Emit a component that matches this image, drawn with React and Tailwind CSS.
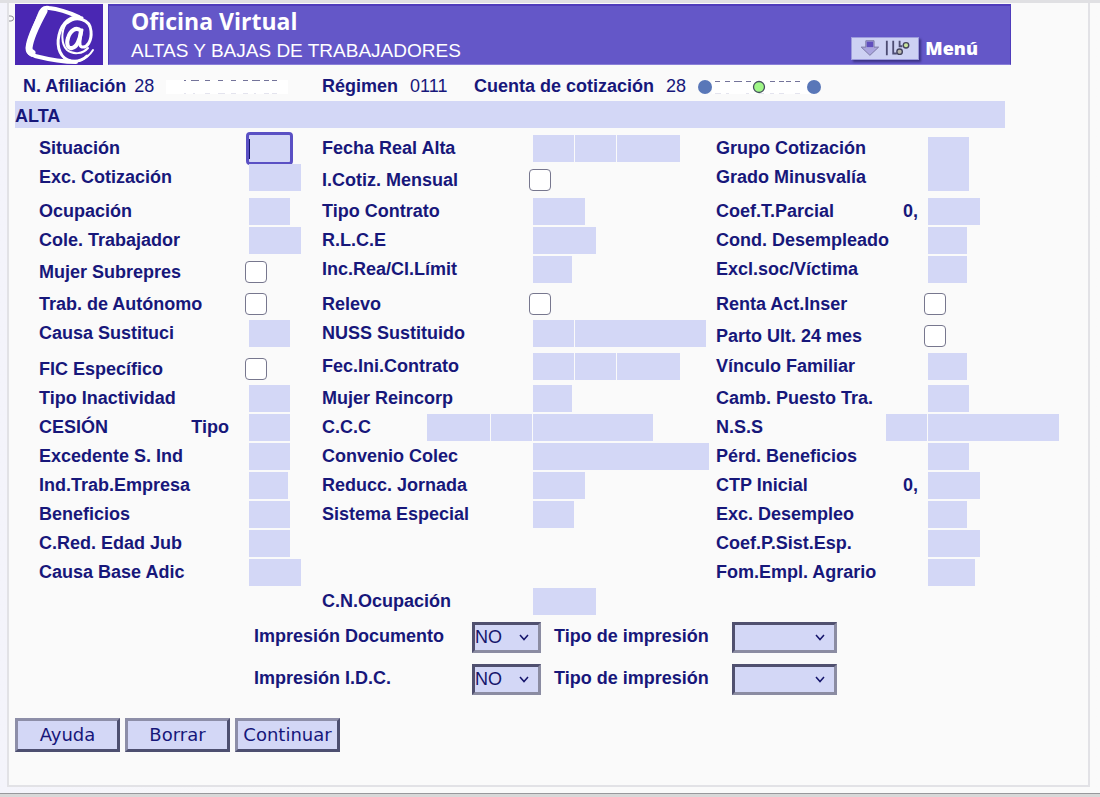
import { Fragment } from 'react'
import clsx from 'clsx'

const WIDTHS = {
  xs: 'w-[39px]',
  sm: 'w-[41px]',
  agr: 'w-[47px]',
  md: 'w-[52px]',
  lg: 'w-[63px]',
  ccc: 'w-[120px]',
  nss: 'w-[131px]',
  text: 'w-[176px]',
}

// One entry per line of the form, three fields on each line
const rows = [
  [
    { label: 'Situación', fields: ['sm'], focused: true },
    { label: 'Fecha Real Alta', fields: ['sm', 'sm', 'lg'] },
    { label: 'Grupo Cotización', fields: ['sm'], bottom: true },
  ],
  [
    { label: 'Exc. Cotización', fields: ['md'] },
    { label: 'I.Cotiz. Mensual', check: true },
    { label: 'Grado Minusvalía', fields: ['sm'] },
  ],
  [
    { label: 'Ocupación', fields: ['sm'] },
    { label: 'Tipo Contrato', fields: ['md'] },
    { label: 'Coef.T.Parcial', prefix: '0,', fields: ['md'] },
  ],
  [
    { label: 'Cole. Trabajador', fields: ['md'] },
    { label: 'R.L.C.E', fields: ['lg'] },
    { label: 'Cond. Desempleado', fields: ['xs'] },
  ],
  [
    { label: 'Mujer Subrepres', check: true },
    { label: 'Inc.Rea/Cl.Límit', fields: ['xs'] },
    { label: 'Excl.soc/Víctima', fields: ['xs'] },
  ],
  [
    { label: 'Trab. de Autónomo', check: true },
    { label: 'Relevo', check: true },
    { label: 'Renta Act.Inser', check: true },
  ],
  [
    { label: 'Causa Sustituci', fields: ['sm'] },
    { label: 'NUSS Sustituido', fields: ['sm', 'nss'] },
    { label: 'Parto Ult. 24 mes', check: true },
  ],
  [
    { label: 'FIC Específico', check: true },
    { label: 'Fec.Ini.Contrato', fields: ['sm', 'sm', 'lg'] },
    { label: 'Vínculo Familiar', fields: ['xs'] },
  ],
  [
    { label: 'Tipo Inactividad', fields: ['sm'] },
    { label: 'Mujer Reincorp', fields: ['xs'] },
    { label: 'Camb. Puesto Tra.', fields: ['sm'] },
  ],
  [
    { label: 'CESIÓN', note: 'Tipo', fields: ['sm'] },
    { label: 'C.C.C', before: ['lg', 'sm'], fields: ['ccc'] },
    { label: 'N.S.S', before: ['sm'], fields: ['nss'] },
  ],
  [
    { label: 'Excedente S. Ind', fields: ['sm'] },
    { label: 'Convenio Colec', fields: ['text'] },
    { label: 'Pérd. Beneficios', fields: ['sm'] },
  ],
  [
    { label: 'Ind.Trab.Empresa', fields: ['xs'] },
    { label: 'Reducc. Jornada', fields: ['md'] },
    { label: 'CTP Inicial', prefix: '0,', fields: ['md'] },
  ],
  [
    { label: 'Beneficios', fields: ['sm'] },
    { label: 'Sistema Especial', fields: ['sm'] },
    { label: 'Exc. Desempleo', fields: ['xs'] },
  ],
  [
    { label: 'C.Red. Edad Jub', fields: ['sm'] },
    null,
    { label: 'Coef.P.Sist.Esp.', fields: ['md'] },
  ],
  [
    { label: 'Causa Base Adic', fields: ['md'] },
    null,
    { label: 'Fom.Empl. Agrario', fields: ['agr'] },
  ],
  [null, { label: 'C.N.Ocupación', fields: ['lg'] }, null],
]

function TextField({ id, size, label, focused }) {
  return (
    <input
      id={id}
      type="text"
      aria-label={label}
      className={clsx(
        'block h-[27px] bg-[#d3d7f6] px-1 text-[18px] text-[#15156b]',
        WIDTHS[size],
        focused ? 'rounded-[1px] outline-3 outline-[#5a50c4]' : 'outline-none'
      )}
    />
  )
}

function Field({ id, item }) {
  if (!item) {
    return (
      <>
        <div />
        <div />
      </>
    )
  }

  if (item.check) {
    return (
      <>
        <label htmlFor={id} className="leading-8">{item.label}</label>
        <div className="flex h-8 items-center">
          <input
            id={id}
            type="checkbox"
            className="size-[22px] appearance-none rounded-[4px] border border-[#77778e] bg-white"
          />
        </div>
      </>
    )
  }

  const before = item.before || []
  return (
    <>
      <div className="flex items-start justify-between whitespace-nowrap">
        <label htmlFor={id} className="leading-[27px]">{item.label}</label>
        {item.note && <span className="pr-4 leading-[27px]">{item.note}</span>}
        {item.prefix && <span className="pr-1.5 leading-[27px]">{item.prefix}</span>}
        {before.length > 0 && (
          <div className="-mr-[3px] flex gap-px">
            {before.map((size, i) => (
              <TextField key={i} size={size} label={`${item.label} ${i + 1}`} />
            ))}
          </div>
        )}
      </div>
      <div className={clsx('relative flex gap-px pl-1', item.bottom ? 'items-end' : 'items-start')}>
        {item.fields.map((size, i) => (
          <TextField
            key={i}
            id={i === 0 ? id : undefined}
            size={size}
            label={i === 0 ? undefined : `${item.label} ${i + 1}`}
            focused={item.focused}
          />
        ))}
        {/* Text cursor */}
        {item.focused && <span className="absolute left-1 top-1 h-5 w-px bg-[#15156b]" />}
      </div>
    </>
  )
}

function Select({ id, className, children }) {
  return (
    <div className={clsx('relative', className)}>
      <select
        id={id}
        className="block h-[31px] w-full appearance-none border-3 border-t-[#50506f] border-r-[#8b8ca2] border-b-[#8b8ca2] border-l-[#50506f] bg-[#d3d7f6] text-[18px] leading-[25px] font-normal text-[#15156b]"
      >
        {children}
      </select>
      <svg viewBox="0 0 10 7" className="pointer-events-none absolute top-3 right-3 h-[7px] w-[10px]" fill="none" stroke="#15156b" strokeWidth="1.5">
        <path d="M1 1l4 4.6L9 1" />
      </svg>
    </div>
  )
}

function PrintOptions({ id, label }) {
  return (
    <div className="flex items-start">
      <label htmlFor={id} className="w-[218px] leading-7">{label}</label>
      <Select id={id} className="w-[69px]">
        <option>NO</option>
        <option>SI</option>
      </Select>
      <label htmlFor={`${id}-tipo`} className="w-[191px] pl-[13px] leading-7">Tipo de impresión</label>
      <Select id={`${id}-tipo`} className="w-[105px]">
        <option></option>
      </Select>
    </div>
  )
}

function Logo() {
  return (
    <svg viewBox="0 0 88 61" className="h-[61px] w-[88px] shrink-0 bg-[#4a27b3]" fill="none" stroke="#fff" strokeLinecap="round" strokeLinejoin="round">
      <path d="M64 13C55 9 44 5 34 4c-6-1-8 2-10 8-4 11-10 22-11 32 0 5 2 6 7 8 12 3 27 6 41 6" strokeWidth="4" />
      <path d="M29 7c-6 11-14 26-15 37 0 2 1 4 3 5" strokeWidth="7" />
      <path d="M67 14C56 10 47 19 44 31c-3 13 2 24 12 26 7 1 12-1 16-5" strokeWidth="3" />
      <path d="M52 19c9-8 23-4 24 8 1 10-4 17-9 16-4-1-2-8 0-17" strokeWidth="3" />
      <path d="M66 27c-5-5-11 0-13 7-2 6 0 11 4 10 5-1 8-9 9-17" strokeWidth="4" />
      <path d="M51 20c-5 7-5 20 1 26 6 5 16 4 21-2M64 57c6-2 11-6 14-11" strokeWidth="2" />
    </svg>
  )
}

function MenuIcon() {
  return (
    <svg viewBox="0 0 68 23" className="h-[23px] w-[68px] border border-[#9d9bdc] bg-[#cdd1f3] shadow-[2px_2px_2px_#3d3486]" fill="none">
      <path d="M13 3h9v7h5l-9.500 9-9.500-9h5z" fill="#aaa5df" stroke="#77739f" />
      <path d="M14 4h7v6h-7z" fill="#604fbe" />
      <path d="M36 3v16M43 3v14h4M50 3v6h3" stroke="#4d4c73" strokeWidth="2" />
      <circle cx="50" cy="15" r="3" fill="#b8b8ad" stroke="#44445c" strokeWidth="1.5" />
      <circle cx="57" cy="8" r="3" fill="#c9e59c" stroke="#44445c" strokeWidth="1.5" />
    </svg>
  )
}

function Header() {
  return (
    <header className="mr-[77px] flex gap-[5px]">
      <Logo />
      <div className="flex h-[61px] flex-1 items-start justify-between border border-t-2 border-[#4f3cbb] border-b-[#8a80d8] bg-[#6457c8] pr-8 pl-[22px] text-white">
        <div>
          <h1 className="font-['Open_Sans','Noto_Sans',sans-serif] text-[23px] leading-[30px] font-bold">Oficina Virtual</h1>
          <h2 className="text-[19px] leading-[30px] font-normal">ALTAS Y BAJAS DE TRABAJADORES</h2>
        </div>
        <a href="#" className="flex items-center gap-1.5 pt-[26px] font-['Open_Sans','Noto_Sans',sans-serif] text-[18px] leading-8 font-extrabold">
          <MenuIcon />
          Menú
        </a>
      </div>
    </header>
  )
}

function AccountInfo() {
  return (
    <div className="grid h-9 grid-cols-[299px_152px_1fr] items-center pt-[7px] pl-2 whitespace-nowrap">
      <div className="flex items-center gap-2">
        <span>N. Afiliación</span>
        <span className="font-normal">28</span>
        {/* Hidden number */}
        <svg viewBox="0 0 122 14" className="ml-1 h-3.5 w-[122px]">
          <path d="M0 0h122v14H0z" fill="#fff" />
          <path d="M18 .5h2M25 .5h8M39 .5h5M52 .5h5M65 .5h5M77 .5h5M86 .5h8M98 .5h5M106 .5h5" stroke="#74749a" />
          <path d="M18 13.5h2M27 13.5h2M39 13.5h5M52 13.5h7M65 13.5h5M77 13.5h5M88 13.5h2M98 13.5h5M106 13.5h5" stroke="#e4e4ee" />
        </svg>
      </div>
      <div className="flex gap-3">
        <span>Régimen</span>
        <span className="font-normal">0111</span>
      </div>
      <div className="flex items-center gap-3">
        <span>Cuenta de cotización</span>
        <span className="font-normal">28</span>
        <svg viewBox="0 0 124 14" className="h-3.5 w-[124px]">
          <path d="M14 0h102v14H14z" fill="#fff" />
          <path d="M17 1.5h5M27 1.5h5M36 1.5h8M48 1.5h5M72 1.5h5M81 1.5h5M88 1.5h5M97 1.5h5" stroke="#74749a" />
          <path d="M17 13.5h6M28 13.5h3M48 13.5h3M61 13.5h5M72 13.5h4M81 13.5h5M97 13.5h5" stroke="#e4e4ee" />
          <circle cx="7" cy="7" r="7" fill="#5977b8" />
          <circle cx="61" cy="7" r="5.5" fill="#a0f787" stroke="#46505f" strokeWidth="1.3" />
          <circle cx="116" cy="7" r="7" fill="#5977b8" />
        </svg>
      </div>
    </div>
  )
}

const buttonClass =
  "h-[34px] w-[105px] border-3 border-t-[#8d8ea8] border-r-[#4d4f70] border-b-[#4d4f70] border-l-[#8d8ea8] bg-[#d3d7f6] font-['DejaVu_Sans',sans-serif] text-[18px] leading-7 font-normal"

export default function App() {
  return (
    <div className="flex min-h-screen flex-col bg-[#fafafa] font-['Liberation_Sans',Arial,sans-serif] text-[18px] font-bold text-[#17177a]">
      <div className="flex-1 border-t-3 border-[#e0e0e3] bg-linear-to-r from-[#f4f4fb] from-0% to-[#fafafa] to-30% pr-[10px] pb-[6px] pl-[7px]">
        <main className="relative h-full border-2 border-t-0 border-[#e2e2e6] bg-[#fafafa] pt-px pb-[33px] pl-[6px]">
          <svg viewBox="0 0 5 7" className="absolute top-3 left-0 h-[7px] w-[5px]" fill="none" stroke="#8d8d95">
            <path d="M0 1h2a2 2 0 0 1 0 5H0" />
          </svg>

          <Header />

          <form onSubmit={(e) => e.preventDefault()}>
            <AccountInfo />
            <h3 className="mr-[83px] h-[27px] bg-[#d3d7f6] leading-[30px]">ALTA</h3>

            {/* Worker data */}
            <div className="mt-[7px] grid grid-cols-[206fr_77fr_207fr_187fr_208fr_164fr] grid-rows-[29px_34px_29px_29px_32px_32px_33px_32px] auto-rows-[29px] pl-6">
              {rows.map((row, r) => (
                <Fragment key={r}>
                  {row.map((item, c) => (
                    <Field key={c} id={`campo-${r}-${c}`} item={item} />
                  ))}
                </Fragment>
              ))}
            </div>

            {/* Print options */}
            <div className="mt-[5px] flex flex-col gap-[11px] pl-[239px]">
              <PrintOptions id="impresion-doc" label="Impresión Documento" />
              <PrintOptions id="impresion-idc" label="Impresión I.D.C." />
            </div>

            <div className="mt-[23px] flex gap-[5px]">
              <button type="button" className={buttonClass}>Ayuda</button>
              <button type="reset" className={buttonClass}>Borrar</button>
              <button type="submit" className={buttonClass}>Continuar</button>
            </div>
          </form>
        </main>
      </div>
      <div className="h-[5px] border-t border-[#98989c] bg-[#d8d8d8]" />
    </div>
  )
}
